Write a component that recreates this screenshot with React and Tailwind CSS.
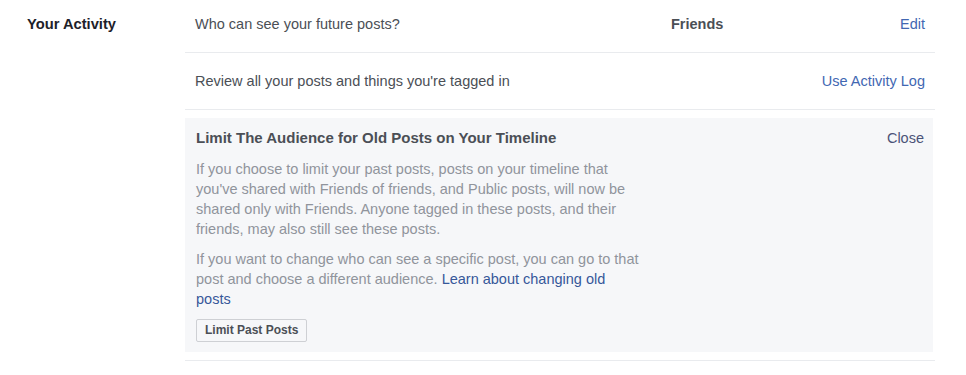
import React from 'react';

export default function App() {
  return (
    <div className="w-[966px] h-[375px] bg-white flex font-['Liberation_Sans',Arial,sans-serif] text-[14.5px] overflow-hidden">
      <div className="w-[185px] shrink-0 pl-[27px] pt-[15px]">
        <h2 className="font-bold text-[#1d2129] text-[14.7px] leading-[18px]">Your Activity</h2>
      </div>
      <div className="w-[750px] flex flex-col">
        <div className="h-[53px] flex items-start pt-[15px] px-[10px] border-b border-[#e9ebee] leading-[18px]">
          <span className="flex-1 text-[#4b4f56]">Who can see your future posts?</span>
          <span className="w-[229px] font-bold text-[#4b4f56]">Friends</span>
          <a href="#" className="text-[#4267b2]">Edit</a>
        </div>
        <div className="h-[57px] flex items-start pt-[19px] px-[10px] border-b border-[#e9ebee] leading-[18px]">
          <span className="flex-1 text-[#4b4f56]">Review all your posts and things you're tagged in</span>
          <a href="#" className="text-[#4267b2]">Use Activity Log</a>
        </div>
        <div className="mt-[8px] w-[748px] h-[234px] bg-[#f6f7f9] px-[11px] pt-[11px]">
          <div className="flex items-start leading-[18px]">
            <h3 className="flex-1 font-bold text-[15px] text-[#4b4f56]">Limit The Audience for Old Posts on Your Timeline</h3>
            <a href="#" className="mr-[-2px] text-[#4b5378]">Close</a>
          </div>
          <p className="mt-[12px] w-[446px] text-[#90949c] leading-[20px]">
            If you choose to limit your past posts, posts on your timeline that you've shared with Friends of friends, and Public posts, will now be shared only with Friends. Anyone tagged in these posts, and their friends, may also still see these posts.
          </p>
          <p className="mt-[10px] w-[446px] text-[#90949c] leading-[20px]">
            If you want to change who can see a specific post, you can go to that post and choose a different audience.{' '}
            <a href="#" className="text-[#365899]">Learn about changing old posts</a>
          </p>
          <button className="mt-[10px] h-[23px] px-[8px] border border-[#ced0d4] rounded-[2px] bg-[#f6f7f9] text-[12px] font-bold text-[#4b4f56] leading-[21px]">
            Limit Past Posts
          </button>
        </div>
        <div className="mt-[8px] border-b border-[#e9ebee]" />
      </div>
    </div>
  );
}
